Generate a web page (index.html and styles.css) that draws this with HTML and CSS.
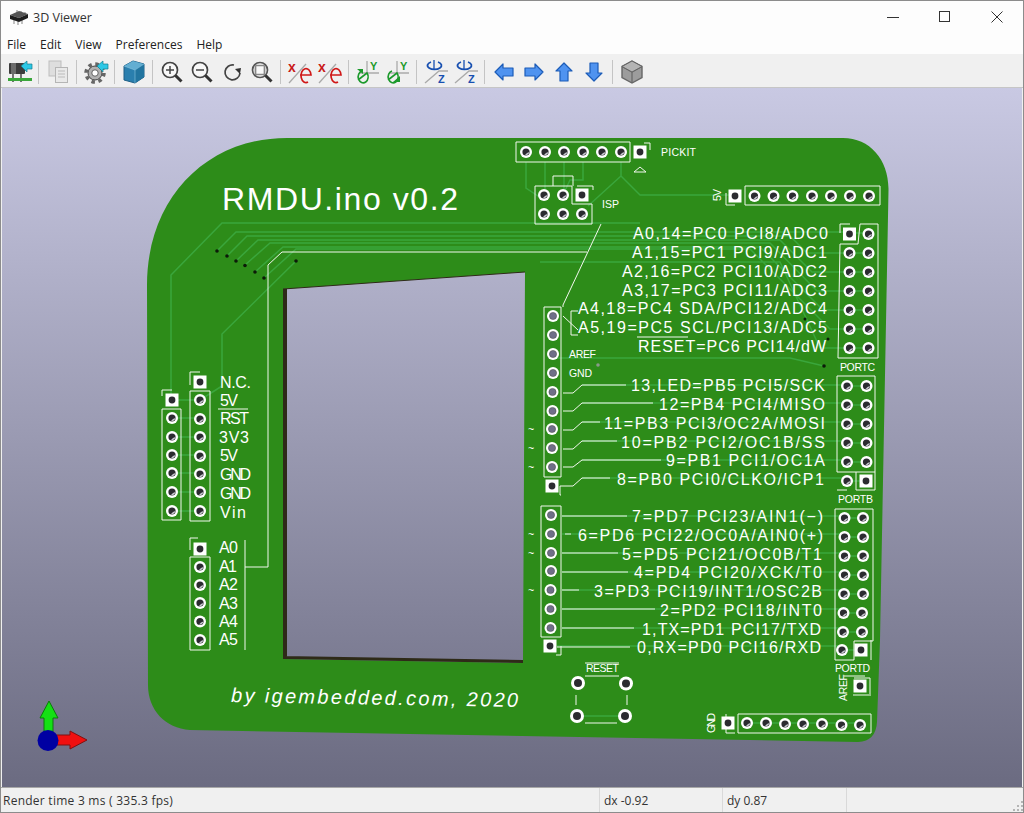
FILE: index.html
```html
<!DOCTYPE html>
<html lang="en">
<head>
<meta charset="utf-8">
<title>3D Viewer</title>
<link rel="stylesheet" href="styles.css">
</head>
<body>
<div class="window">
  <header class="titlebar">
    <div class="title">
      <svg class="appicon" viewBox="0 0 18 15" width="18" height="15"><path class="chip-leg" d="M4 9v5M8 10v5M12 10v4M7 3V0M11 4V1M15 5V2"/><path class="chip-top" d="M0 5 9 1l9 3-9 4z"/><path class="chip-side" d="M0 5l9 3v4L0 9zM9 8l9-4v4l-9 4z"/></svg>
      <span>3D Viewer</span>
    </div>
    <div class="winctl">
      <svg viewBox="0 0 12 12" width="12" height="12"><path d="M0 6.500h12"/></svg>
      <svg viewBox="0 0 12 12" width="12" height="12"><rect x=".5" y=".5" width="10" height="10"/></svg>
      <svg viewBox="0 0 12 12" width="12" height="12"><path d="M.5.5l11 11M11.500.5l-11 11"/></svg>
    </div>
  </header>
  <nav class="menubar"><span>File</span><span>Edit</span><span>View</span><span>Preferences</span><span>Help</span></nav>
  <div class="toolbar">
    <button class="tb"><svg viewBox="0 0 24 24"><rect x="1" y="3" width="16" height="11" rx="1" fill="#3c3c3c"/><rect x="3" y="3" width="5" height="11" fill="#6c6c6c"/><path d="M5 14v8M13 14v8" stroke="#555" stroke-width="1.600"/><rect y="18" width="24" height="3" fill="#3aa63a"/><path d="M13 6l6-5v3h5v5h-5v3z" fill="#2cc8e6" stroke="#14808f" stroke-width=".7"/></svg></button>
    <i class="sep"></i>
    <button class="tb"><svg viewBox="0 0 24 24"><rect x="3" y="1" width="12" height="15" fill="#dedede" stroke="#bdbdbd"/><rect x="9.500" y="7.500" width="12" height="15" fill="#e9e9e9" stroke="#b5b5b5"/><path d="M12 11h7M12 14h7M12 17h7" stroke="#bbb"/></svg></button>
    <i class="sep"></i>
    <button class="tb"><svg viewBox="0 0 24 24"><circle cx="11" cy="13" r="9" fill="none" stroke="#666" stroke-width="3.500" stroke-dasharray="3.500 3.570"/><circle cx="11" cy="13" r="7" fill="#b0b0b0" stroke="#444"/><circle cx="11" cy="13" r="3.200" fill="#fff" stroke="#444" stroke-width=".8"/><path d="M13 6l6-5v3h5v5h-5v3z" fill="#2cc8e6" stroke="#14808f" stroke-width=".7"/></svg></button>
    <i class="sep"></i>
    <button class="tb"><svg viewBox="0 0 24 24"><path d="M2 6l9-5 11 3v13l-9 6-11-3z" fill="#2a7fae" stroke="#1e5f86"/><path d="M2 6l11 4 9-6-11-3z" fill="#62aed2"/><path d="M13 10v13l9-6V4z" fill="#2275a0"/><path d="M2 6l11 4 9-6M13 10v13" fill="none" stroke="#8cc6e0" stroke-width=".6"/></svg></button>
    <i class="sep"></i>
    <button class="tb"><svg viewBox="0 0 24 24"><circle cx="10" cy="10" r="7.500" fill="#f8f8f8" stroke="#444" stroke-width="1.700"/><path d="M6 10h8M10 6v8" stroke="#444" stroke-width="1.500"/><path d="M15.500 15.500l6 6" stroke="#333" stroke-width="3"/></svg></button>
    <button class="tb"><svg viewBox="0 0 24 24"><circle cx="10" cy="10" r="7.500" fill="#f8f8f8" stroke="#444" stroke-width="1.700"/><path d="M6 10h8" stroke="#444" stroke-width="1.500"/><path d="M15.500 15.500l6 6" stroke="#333" stroke-width="3"/></svg></button>
    <button class="tb"><svg viewBox="0 0 24 24"><path d="M14 5a7.500 7.500 0 1 0 6 8" fill="none" stroke="#444" stroke-width="1.700"/><path d="M15 9l6-1-1 6z" fill="#333"/></svg></button>
    <button class="tb"><svg viewBox="0 0 24 24"><circle cx="10" cy="10" r="7.500" fill="#f8f8f8" stroke="#555" stroke-width="1.700"/><rect x="5.500" y="5.500" width="9" height="9" rx="1" fill="none" stroke="#888" stroke-width="1.700"/><path d="M15.500 15.500l6 6" stroke="#333" stroke-width="3"/></svg></button>
    <i class="sep"></i>
    <button class="tb"><svg viewBox="0 0 24 24"><path d="M1 23L18 4" stroke="#aaa" stroke-width="1.300"/><text class="axl red" x="0" y="12">x</text><path d="M12 15h11a5 7 0 1 0-3 7" fill="none" stroke="#d01818" stroke-width="1.700"/></svg></button>
    <button class="tb"><svg viewBox="0 0 24 24"><path d="M1 23L18 4" stroke="#aaa" stroke-width="1.300"/><text class="axl red" x="0" y="12">x</text><path d="M12 15h11a5 7 0 1 0-3 7" fill="none" stroke="#d01818" stroke-width="1.700"/></svg></button>
    <i class="sep"></i>
    <button class="tb"><svg viewBox="0 0 24 24"><path d="M11 1v12M4 13h19" stroke="#aaa" stroke-width="1.300"/><text class="ax grn" x="14" y="10">Y</text><path d="M6 11a5 6 0 1 0 5 2L2 20" fill="none" stroke="#1c9a2c" stroke-width="1.600"/><path d="M1 9h6v5z" fill="#1c9a2c"/></svg></button>
    <button class="tb"><svg viewBox="0 0 24 24"><path d="M11 1v12M4 13h19" stroke="#aaa" stroke-width="1.300"/><text class="ax grn" x="14" y="10">Y</text><path d="M6 11a5 6 0 1 0 5 2L2 20" fill="none" stroke="#1c9a2c" stroke-width="1.600"/><path d="M7 22h7v-6z" fill="#1c9a2c"/></svg></button>
    <i class="sep"></i>
    <button class="tb"><svg viewBox="0 0 24 24"><path d="M1 23L15 11h9" stroke="#aaa" stroke-width="1.300" fill="none"/><path d="M10 0v10" stroke="#1850b0" stroke-width="1.300"/><path d="M7 2a7 4 0 1 0 7 0" fill="none" stroke="#1850b0" stroke-width="1.800"/><text class="ax blu" x="14" y="23">Z</text></svg></button>
    <button class="tb"><svg viewBox="0 0 24 24"><path d="M1 23L15 11h9" stroke="#aaa" stroke-width="1.300" fill="none"/><path d="M10 0v10" stroke="#1850b0" stroke-width="1.300"/><path d="M7 2a7 4 0 1 0 7 0" fill="none" stroke="#1850b0" stroke-width="1.800"/><text class="ax blu" x="14" y="23">Z</text></svg></button>
    <i class="sep"></i>
    <button class="tb"><svg viewBox="0 0 24 24"><path class="arw" d="M3 12l8-8v4h10v8H11v4z"/></svg></button>
    <button class="tb"><svg viewBox="0 0 24 24"><path class="arw" d="M21 12l-8-8v4H3v8h10v4z"/></svg></button>
    <button class="tb"><svg viewBox="0 0 24 24"><path class="arw" d="M12 3l-8 8h4v10h8V11h4z"/></svg></button>
    <button class="tb"><svg viewBox="0 0 24 24"><path class="arw" d="M12 21l-8-8h4V3h8v10h4z"/></svg></button>
    <i class="sep"></i>
    <button class="tb"><svg viewBox="0 0 24 24"><path d="M12 1l10 5.500v11L12 23 2 17.500v-11z" fill="#9c9c9c" stroke="#666" stroke-width="1.400"/><path d="M2 6.500L12 12l10-5.500M12 12v11" fill="none" stroke="#666" stroke-width="1.200"/><path d="M12 1l10 5.500L12 12 2 6.500z" fill="#b4b4b4" stroke="#666"/></svg></button>
  </div>
  <main class="canvas">
    <svg class="scene" viewBox="2 88 1020 699" preserveAspectRatio="none">
      <defs>
        <g id="p"><circle class="ring" r="6"/><circle class="hole" r="3.600"/><path class="glint" d="M-1 3A3.600 3.600 0 0 0 3.400 0 L1 1z"/></g>
        <g id="g"><circle class="ring" r="6"/><circle class="holeg" r="3.600"/></g>
        <g id="q"><rect class="ring" x="-6.500" y="-6.500" width="13" height="13"/><circle class="hole" r="3.400"/></g>
        <g id="b"><circle class="ring" r="7"/><circle class="hole" r="4"/></g>
      </defs>

      <path class="board" fill-rule="evenodd" d="M147 285C147 200 205 138 287 138L843 138C870 138 889 160 888.500 190L880 640L877 722Q876 741 858 742L190 730C165 728 148 710 148 685ZM283 289L283 659L523 663L525 272Z"/>
      <path class="edge" d="M283 289L287 288.700L287 656L283 659ZM283 656L523 660L523 663L283 659Z"/>
      <path class="edge-top" d="M283 289L525 272"/>

      <path class="tr" d="M171 400V275L222 223H640M217 251L236 232H849M227 256L247 236H790L807 253H849M236 261L258 240H780L812 272H849M245 265L270 243H770L817 291H849M255 272L283 247H760L823 310H849M264 278L296 249H750L830 329H849M296 261L222 334V386L200 400M540 262H770L780 262L820 348H868M172 400H200M172 418H200M172 437H200M172 455H200M172 473H200M172 492H200M172 511H200M849 233H868M849 253H868M849 272H868M849 291H868M849 310H868M849 329H868M849 348H868M847 386H866M847 405H866M847 424H866M847 443H866M847 462H866M847 481H866M844 518H863M844 537H863M844 556H863M844 575H863M844 594H863M844 613H863M844 632H863M842 650H861M526 162V188L544 200M545 162V195M564 162V195M583 162V180H570L563 195M621 162V176L588 206M621 176L640 195H735M747 723H860M582 385H847M582 403H847M582 422H847M582 441H847M582 460H847M582 478H847M562 516H844M562 534H844M562 553H844M562 572H844M562 590H844M562 609H844M562 628H844M557 646H842M553 358H790L824 366M578 716H626"/>

      <path class="silk" d="M516 142H630V162H516ZM644 143H650V150M634 172L640 167L646 172ZM535 186H572V204H592V224H535ZM553 186V176H573V186M577 186H593V190M726 193V205H735M745 186H880V205H745ZM840 233V224H850M860 224H878V358H838L840 244H858L860 224ZM837 376H875V490H856V472H837ZM856 472H875M847 490H837M835 509H873V641H854V660H835V642L835 509M871 640V660M844 676L865 676M854 678H870V694M853 695H871M738 714H871V733H738ZM726 714V733H735M544 307H561V477H544ZM561 495H560V486M541 506H561V637H541ZM556 655H561V646M162 409H181V520H162ZM162 396V390H172M190 391H210V521H190ZM190 385V372H200M190 557H210V650H190ZM190 550V538H198M245 540V650M245 567H268V265L282 252H587M601 224L563 305V307M637 337H688M218 409H248M571 335V311H578M571 335H578M563 316L578 330M585 663H619M585 676H619M576 695V705M627 695V705M585 723H617M563 393H573L582 385H626M563 411H573L582 403H653M563 430H573L582 422H600M563 449H573L582 441H617M563 467H573L582 460H661M560 486H573L582 478H610M562 516H627M565 534H571M562 553H618M562 572H628M562 590H579M562 609H655M562 628H634M557 647H630"/>

      <g class="vias"><circle cx="217" cy="251" r="1.800"/><circle cx="227" cy="256" r="1.800"/><circle cx="236" cy="261" r="1.800"/><circle cx="245" cy="265.500" r="1.800"/><circle cx="255" cy="272" r="1.800"/><circle cx="264" cy="278" r="1.800"/><circle cx="296" cy="261" r="1.800"/><circle cx="805" cy="319" r="1.500"/><circle cx="828" cy="339" r="1.500"/><circle cx="824" cy="366" r="1.800"/></g>
      <circle class="viag" cx="598" cy="365" r="1.800"/>

      <use href="#p" x="526" y="152"/><use href="#p" x="545" y="152"/><use href="#p" x="564" y="152"/><use href="#p" x="583" y="152"/><use href="#p" x="602" y="152"/><use href="#p" x="621" y="152"/><use href="#q" x="640" y="152"/>
      <use href="#p" x="544" y="195"/><use href="#p" x="563" y="195"/><use href="#q" x="582" y="195"/><use href="#p" x="544" y="214"/><use href="#p" x="563" y="214"/><use href="#p" x="582" y="214"/>
      <use href="#q" x="735" y="196"/><use href="#p" x="754.500" y="196"/><use href="#p" x="773.500" y="196"/><use href="#p" x="792.500" y="196"/><use href="#p" x="812" y="196"/><use href="#p" x="831" y="196"/><use href="#p" x="850" y="196"/><use href="#p" x="869" y="196"/>
      <use href="#q" x="849.500" y="234"/><use href="#p" x="868.500" y="234"/><use href="#p" x="849.500" y="253"/><use href="#p" x="868.500" y="253"/><use href="#p" x="849.500" y="272"/><use href="#p" x="868.500" y="272"/><use href="#p" x="849.500" y="291"/><use href="#p" x="868.500" y="291"/><use href="#p" x="849.500" y="310"/><use href="#p" x="868.500" y="310"/><use href="#p" x="849.500" y="329"/><use href="#p" x="868.500" y="329"/><use href="#p" x="849.500" y="348"/><use href="#p" x="868.500" y="348"/>
      <use href="#p" x="847" y="386"/><use href="#p" x="866.500" y="386"/><use href="#p" x="847" y="405"/><use href="#p" x="866.500" y="405"/><use href="#p" x="847" y="424"/><use href="#p" x="866.500" y="424"/><use href="#p" x="847" y="443"/><use href="#p" x="866.500" y="443"/><use href="#p" x="847" y="462"/><use href="#p" x="866.500" y="462"/><use href="#p" x="847" y="481"/><use href="#q" x="866" y="481"/>
      <use href="#p" x="844.500" y="518"/><use href="#p" x="863" y="518"/><use href="#p" x="844.500" y="537"/><use href="#p" x="863" y="537"/><use href="#p" x="844.500" y="556"/><use href="#p" x="863" y="556"/><use href="#p" x="844.500" y="575"/><use href="#p" x="863" y="575"/><use href="#p" x="844" y="594"/><use href="#p" x="863" y="594"/><use href="#p" x="843.500" y="613"/><use href="#p" x="862" y="613"/><use href="#p" x="843" y="632"/><use href="#p" x="862" y="632"/><use href="#p" x="842" y="650"/><use href="#q" x="861" y="650"/>
      <use href="#q" x="860" y="686"/>
      <use href="#q" x="728" y="723"/><use href="#p" x="747" y="723"/><use href="#p" x="766" y="723"/><use href="#p" x="785" y="724"/><use href="#p" x="803" y="724"/><use href="#p" x="822" y="724"/><use href="#p" x="841.500" y="725"/><use href="#p" x="860" y="725"/>
      <use href="#g" x="553" y="316"/><use href="#g" x="553" y="335"/><use href="#g" x="553" y="354"/><use href="#g" x="553" y="373"/><use href="#g" x="552.500" y="392"/><use href="#g" x="552.500" y="411"/><use href="#g" x="552" y="429"/><use href="#g" x="552" y="448"/><use href="#g" x="552" y="467"/><use href="#q" x="552" y="486"/>
      <use href="#g" x="551" y="515"/><use href="#g" x="551" y="534"/><use href="#g" x="551" y="553"/><use href="#g" x="551" y="571"/><use href="#g" x="550.500" y="590"/><use href="#g" x="550.500" y="609"/><use href="#g" x="550.500" y="628"/><use href="#q" x="550" y="646"/>
      <use href="#q" x="172" y="400"/><use href="#p" x="172" y="418"/><use href="#p" x="172" y="437"/><use href="#p" x="172" y="455"/><use href="#p" x="172" y="473"/><use href="#p" x="172" y="492"/><use href="#p" x="172" y="511"/>
      <use href="#q" x="200" y="382"/><use href="#p" x="200" y="400"/><use href="#p" x="200" y="419"/><use href="#p" x="200" y="437"/><use href="#p" x="200" y="456"/><use href="#p" x="200" y="474"/><use href="#p" x="200" y="492"/><use href="#p" x="200" y="511"/>
      <use href="#q" x="200" y="549"/><use href="#p" x="200" y="567"/><use href="#p" x="200" y="585"/><use href="#p" x="200" y="603"/><use href="#p" x="200" y="621.500"/><use href="#p" x="200" y="640"/>
      <use href="#b" x="578" y="683"/><use href="#b" x="626" y="683.500"/><use href="#b" x="577" y="716"/><use href="#b" x="625" y="716"/>

      <text class="big" x="222" y="210" textLength="236">RMDU.ino v0.2</text>
      <text class="by" x="231" y="702" textLength="287" transform="rotate(1 231 702)">by igembedded.com, 2020</text>

      <g class="sk">
        <text x="633" y="239" textLength="195">A0,14=PC0 PCI8/ADC0</text>
        <text x="632" y="258" textLength="195">A1,15=PC1 PCI9/ADC1</text>
        <text x="622" y="276.500" textLength="205">A2,16=PC2 PCI10/ADC2</text>
        <text x="622" y="295.500" textLength="205">A3,17=PC3 PCI11/ADC3</text>
        <text x="578" y="314" textLength="249">A4,18=PC4 SDA/PCI12/ADC4</text>
        <text x="578" y="333" textLength="249">A5,19=PC5 SCL/PCI13/ADC5</text>
        <text x="638" y="352" textLength="188">RESET=PC6 PCI14/dW</text>
        <text x="631" y="391" textLength="194">13,LED=PB5 PCI5/SCK</text>
        <text x="659" y="410" textLength="166">12=PB4 PCI4/MISO</text>
        <text x="604" y="428.500" textLength="221">11=PB3 PCI3/OC2A/MOSI</text>
        <text x="621" y="447.500" textLength="204">10=PB2 PCI2/OC1B/SS</text>
        <text x="666" y="466" textLength="159">9=PB1 PCI1/OC1A</text>
        <text x="617" y="485" textLength="207">8=PB0 PCI0/CLKO/ICP1</text>
        <text x="632" y="522" textLength="191">7=PD7 PCI23/AIN1(−)</text>
        <text x="578" y="541" textLength="245">6=PD6 PCI22/OC0A/AIN0(+)</text>
        <text x="622" y="559.500" textLength="200">5=PD5 PCI21/OC0B/T1</text>
        <text x="634" y="578" textLength="188">4=PD4 PCI20/XCK/T0</text>
        <text x="594" y="597" textLength="228">3=PD3 PCI19/INT1/OSC2B</text>
        <text x="660" y="616" textLength="162">2=PD2 PCI18/INT0</text>
        <text x="642" y="634.500" textLength="179">1,TX=PD1 PCI17/TXD</text>
        <text x="637" y="653" textLength="184">0,RX=PD0 PCI16/RXD</text>
        <text x="220" y="388" textLength="31">N.C.</text>
        <text x="220" y="406" textLength="18">5V</text>
        <text x="220" y="424" textLength="29">RST</text>
        <text x="219" y="443" textLength="30">3V3</text>
        <text x="220" y="461" textLength="18">5V</text>
        <text x="220" y="480" textLength="31">GND</text>
        <text x="220" y="499" textLength="31">GND</text>
        <text x="220" y="518" textLength="26">Vin</text>
        <text x="219" y="553" textLength="19">A0</text>
        <text x="219" y="571.500" textLength="18">A1</text>
        <text x="219" y="590" textLength="19">A2</text>
        <text x="219" y="608.500" textLength="19">A3</text>
        <text x="219" y="627" textLength="19">A4</text>
        <text x="219" y="645" textLength="19">A5</text>
      </g>
      <g class="sm">
        <text x="661" y="156" textLength="35">PICKIT</text>
        <text x="602" y="208" textLength="17">ISP</text>
        <text x="569" y="358" textLength="27">AREF</text>
        <text x="569" y="377" textLength="23">GND</text>
        <text x="840" y="371" textLength="35">PORTC</text>
        <text x="838" y="503" textLength="35">PORTB</text>
        <text x="835" y="672" textLength="35">PORTD</text>
        <text x="586" y="672" textLength="33">RESET</text>
        <text x="721" y="201" textLength="12" transform="rotate(-90 721 201)">5V</text>
        <text x="847" y="701" textLength="27" transform="rotate(-90 847 701)">AREF</text>
        <text x="715" y="733" textLength="20" transform="rotate(-90 715 733)">GND</text>
        <text x="528" y="433">~</text><text x="528" y="452">~</text><text x="528" y="471">~</text>
        <text x="528" y="538">~</text><text x="528" y="557">~</text><text x="528" y="594">~</text>
      </g>

      <path class="gz-g" d="M44 736V718H40L49 701 58 718H53V736Z"/>
      <path class="gz-r" d="M56 735H70V731L87 740 70 749V745H56Z"/>
      <circle class="gz-b" cx="48" cy="740.500" r="10.500"/>
    </svg>
  </main>
  <footer class="statusbar">
    <span class="s1">Render time 3 ms ( 335.3 fps)</span>
    <span class="s2">dx -0.92</span>
    <span class="s3">dy 0.87</span>
    <span class="s4"><svg class="grip" viewBox="0 0 10 10" width="10" height="10"><path d="M8 0h2v2H8zM4 4h2v2H4zM8 4h2v2H8zM0 8h2v2H0zM4 8h2v2H4zM8 8h2v2H8z"/></svg></span>
  </footer>
</div>
</body>
</html>
```
FILE: styles.css
```css
* { box-sizing: border-box; }
html, body { margin: 0; padding: 0; }
body { font-family: "Open Sans", "Liberation Sans", sans-serif; font-size: 12px; color: #222; }
.window { width: 1024px; height: 813px; display: flex; flex-direction: column; border: 1px solid #8c8c8c; background: #f0f0f0; overflow: hidden; }

.titlebar { height: 29px; flex: none; background: #fdfdfd; display: flex; align-items: center; justify-content: space-between; padding: 3px 0 0 9px; }
.title { display: flex; align-items: center; gap: 5px; font-size: 12.500px; color: #333; }
.appicon { display: block; }
.chip-top { fill: #555; }
.chip-side { fill: #1e1e1e; }
.chip-leg { stroke: #999; stroke-width: 1.200; fill: none; }
.winctl { display: flex; gap: 40px; padding-right: 20px; }
.winctl svg { display: block; width: 12px; height: 12px; fill: none; stroke: #333; stroke-width: 1; }

.menubar { height: 24px; flex: none; background: #fdfdfd; display: flex; align-items: center; gap: 14px; padding: 4px 0 0 6px; font-size: 12px; color: #222; }

.toolbar { height: 34px; flex: none; background: #f0f0f0; border-bottom: 1px solid #c6c6c6; display: flex; align-items: center; padding: 2px 0 0 4px; }
.tb { width: 30px; height: 24px; padding: 0; margin: 0; border: 0; background: none; display: flex; justify-content: center; }
.tb svg { display: block; width: 24px; height: 24px; overflow: visible; }
.sep { width: 8px; height: 24px; flex: none; position: relative; }
.sep::before { content: ""; display: block; width: 1px; height: 100%; margin-left: 3px; background: #c4c4c4; }
.ax { font-family: "Liberation Sans", sans-serif; font-weight: 700; font-size: 11px; }
.axl { font-family: "Liberation Sans", sans-serif; font-weight: 700; font-size: 14px; }
.red { fill: #c81818; }
.grn { fill: #1c9a2c; }
.blu { fill: #1850b0; }
.arw { fill: #4f93f0; stroke: #1c5cb8; stroke-width: 1.200; stroke-linejoin: round; }

.canvas { flex: 1; min-height: 0; margin: 0 1px; background: linear-gradient(#c9c9e3, #6b6b81); }
.scene { display: block; width: 100%; height: 100%; }
.board { fill: #2d8c19; }
.edge { fill: #2e2a18; }
.edge-top { stroke: #2e2a18; stroke-width: 1; fill: none; }
.tr { fill: none; stroke: #3aa63c; stroke-width: 1.500; }
.silk { fill: none; stroke: #f2f7ee; stroke-width: 1; }
.ring { fill: #fff; }
.hole { fill: #2b2b30; }
.holeg { fill: #6f6f88; stroke: #444; stroke-width: .5; }
.glint { fill: #c8c8d0; }
.vias { fill: #0c1a08; }
.viag { fill: #8a9a8a; }

.big, .by, .sk text, .sm text { font-family: "Liberation Sans", sans-serif; fill: #fff; }
.big { font-size: 32px; font-weight: 400; }
.by { font-size: 20px; font-style: italic; font-weight: 400; }
.sk text { font-size: 16px; font-weight: 400; }
.sm text { font-size: 10.500px; font-weight: 400; }

.gz-g { fill: #14e014; stroke: #0a7a0a; stroke-width: 1; }
.gz-r { fill: #f01010; stroke: #801010; stroke-width: 1; }
.gz-b { fill: #0000a2; }

.statusbar { height: 25px; flex: none; background: #f0f0f0; border-top: 1px solid #a8a8a8; display: flex; align-items: center; font-size: 12px; color: #333; }
.statusbar span { height: 100%; display: flex; align-items: center; border-right: 1px solid #d9d9d9; padding-left: 2px; }
.s1 { width: 599px; letter-spacing: .25px; }
.s2 { width: 123px; padding-left: 4px !important; }
.s3 { width: 124px; padding-left: 4px !important; }
.s4 { border-right: 0 !important; flex: 1; justify-content: flex-end; align-items: flex-end !important; padding-bottom: 1px; }
.grip { display: block; fill: #b5b5b5; }
```
